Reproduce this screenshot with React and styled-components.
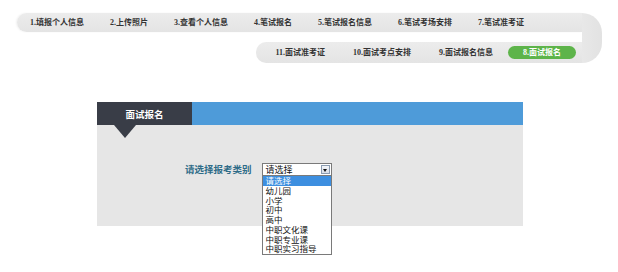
import React from 'react'
import styled, { createGlobalStyle } from 'styled-components'

const Global = createGlobalStyle`
    body{
        margin: 0;
        background: #fff;
        font-family: "Liberation Serif", "Noto Sans CJK SC", serif;
    }
`

const steps1 = ['1.填报个人信息', '2.上传照片', '3.查看个人信息', '4.笔试报名', '5.笔试报名信息', '6.笔试考场安排', '7.笔试准考证']
const steps2 = ['11.面试准考证', '10.面试考点安排', '9.面试报名信息']
const options = ['请选择', '幼儿园', '小学', '初中', '高中', '中职文化课', '中职专业课', '中职实习指导']

function App() {
  return (
    <Page>
        <Global />
        <Steps>
            <TopRow>
                {steps1.map(s => <Step key={s}>{s}</Step>)}
            </TopRow>
            <Cap />
            <BottomRow>
                {steps2.map(s => <Step key={s}>{s}</Step>)}
                <Step active>8.面试报名</Step>
            </BottomRow>
        </Steps>

        <Panel>
            <Head>
                <Tab>面试报名</Tab>
                <Bar />
            </Head>
            <Body>
                <Label>请选择报考类别</Label>
                <SelectWrap>
                    <SelectBox>
                        <span>请选择</span>
                        <Arrow />
                    </SelectBox>
                    <List>
                        {options.map((o, i) => <Option key={o} selected={i === 0}>{o}</Option>)}
                    </List>
                </SelectWrap>
            </Body>
        </Panel>
    </Page>
  )
}

export default App

const Page = styled.div`
    width: 618px;
    height: 272px;
    padding-top: 13px;
    box-sizing: border-box;
`

const Steps = styled.div`
    margin-left: 17px;
    display: grid;
    grid-template-columns: 239px 326px 20px;
    grid-template-rows: 19px 10px 21px;
`

const TopRow = styled.div`
    grid-column: 1 / 3;
    grid-row: 1;
    background: linear-gradient(#ececec, #e4e4e4);
    border-radius: 10px 0 0 10px;
    display: flex;
    align-items: center;
    box-shadow: -1px 0 2px rgba(0,0,0,0.06);
`

const BottomRow = styled.div`
    grid-column: 2;
    grid-row: 3;
    background: linear-gradient(#ececec, #e4e4e4);
    border-radius: 10px 0 0 10px;
    display: flex;
    align-items: center;
    justify-content: flex-end;
    padding-right: 6px;
    gap: 2px;
`

const Cap = styled.div`
    grid-column: 3;
    grid-row: 1 / 4;
    background: linear-gradient(90deg, #e8e8e8, #e2e2e2);
    border-radius: 0 25px 25px 0;
`

const Step = styled.div`
    padding: 0 ${p => p.active ? 15 : 13}px;
    height: 13px;
    line-height: 13px;
    font-size: 8px;
    font-weight: bold;
    white-space: nowrap;
    color: ${p => p.active ? '#fff' : '#333'};
    background: ${p => p.active ? '#5db44a' : 'transparent'};
    border-radius: 7px;
`

const Panel = styled.div`
    margin: 39px 0 0 97px;
    width: 426px;
`

const Head = styled.div`
    display: flex;
    height: 23px;
`

const Tab = styled.div`
    position: relative;
    width: 95px;
    background: #393d47;
    color: #fff;
    font-size: 9.5px;
    font-weight: bold;
    display: flex;
    align-items: center;
    justify-content: center;
    &::after{
        content: '';
        position: absolute;
        left: 17px;
        top: 23px;
        border-left: 11px solid transparent;
        border-right: 11px solid transparent;
        border-top: 13px solid #393d47;
        z-index: 2;
    }
`

const Bar = styled.div`
    flex: 1;
    background: #4e9bd9;
`

const Body = styled.div`
    height: 101px;
    background: #e6e6e6;
    box-sizing: border-box;
    padding: 38px 0 0 88px;
    display: flex;
    align-items: flex-start;
    gap: 10px;
`

const Label = styled.div`
    font-family: "Noto Sans CJK SC", sans-serif;
    font-size: 9.5px;
    font-weight: bold;
    color: #2f6c88;
    line-height: 12px;
    white-space: nowrap;
`

const SelectWrap = styled.div`
    position: relative;
    width: 70px;
`

const SelectBox = styled.div`
    height: 11px;
    border: 1px solid #7a7a7a;
    background: #fff;
    display: flex;
    align-items: center;
    justify-content: space-between;
    padding-left: 3px;
    font-family: "Noto Sans CJK SC", sans-serif;
    font-size: 9px;
    color: #111;
    line-height: 11px;
`

const Arrow = styled.div`
    width: 9px;
    height: 9px;
    margin-right: 1px;
    border: 1px solid #8a9bb0;
    box-sizing: border-box;
    background: linear-gradient(#f4f6fa, #d8dee8);
    position: relative;
    &::after{
        content: '';
        position: absolute;
        left: 1.5px;
        top: 2.5px;
        border-left: 2.5px solid transparent;
        border-right: 2.5px solid transparent;
        border-top: 3px solid #111;
    }
`

const List = styled.div`
    position: absolute;
    top: 12px;
    left: 0;
    width: 70px;
    box-sizing: border-box;
    border: 1px solid #7a7a7a;
    background: #fff;
    z-index: 3;
`

const Option = styled.div`
    height: 9.75px;
    line-height: 9.75px;
    padding-left: 3px;
    font-family: "Noto Sans CJK SC", sans-serif;
    font-size: 8.5px;
    color: ${p => p.selected ? '#fff' : '#111'};
    background: ${p => p.selected ? '#3d8fe0' : 'transparent'};
    white-space: nowrap;
`
